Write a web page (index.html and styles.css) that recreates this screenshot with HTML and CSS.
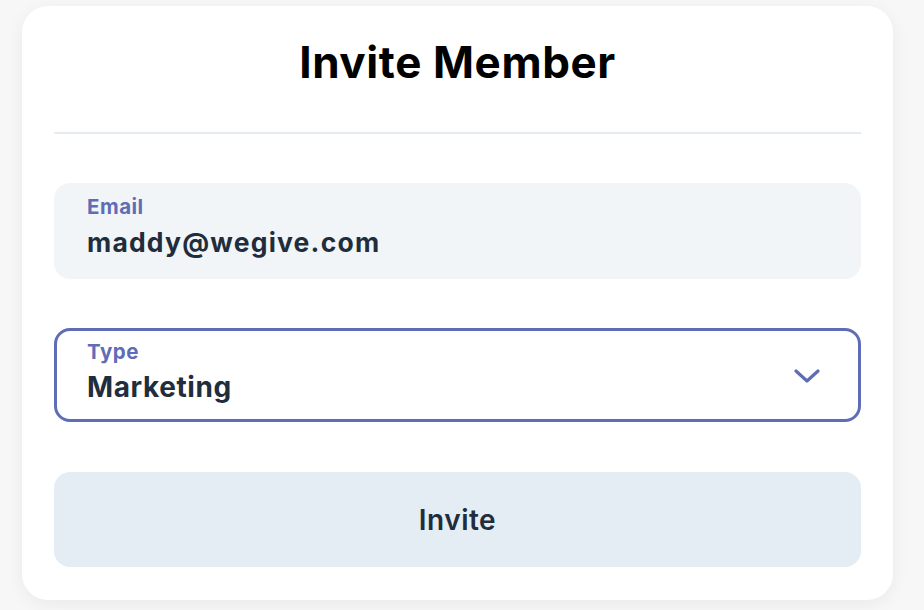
FILE: index.html
```html
<!DOCTYPE html>
<html>
<head>
<meta charset="utf-8">
<link rel="stylesheet" href="styles.css">
</head>
<body>
<div class="card">
  <h1 class="title">Invite Member</h1>
  <div class="divider"></div>
  <div class="field field-filled">
    <div class="label">Email</div>
    <div class="value value-email">maddy@wegive.com</div>
  </div>
  <div class="field field-select">
    <div class="field-text">
      <div class="label">Type</div>
      <div class="value value-type">Marketing</div>
    </div>
    <svg class="chevron" width="26" height="16" viewBox="0 0 26 16"><path d="M2 3 L13 13 L24 3" fill="none" stroke="#5f6db6" stroke-width="3.2" stroke-linecap="round" stroke-linejoin="round"/></svg>
  </div>
  <button class="btn">Invite</button>
</div>
</body>
</html>
```
FILE: styles.css
```css
html, body { margin: 0; padding: 0; }
body {
  background: #f7f7f7;
  font-family: "Inter", "Lato", sans-serif;
  width: 924px;
  height: 610px;
  overflow: hidden;
}
.card {
  margin: 6px 0 0 22px;
  width: 871px;
  height: 594px;
  box-sizing: border-box;
  background: #fff;
  border-radius: 26px;
  box-shadow: 0 4px 18px rgba(0,0,0,0.06);
  padding: 0 32px;
  display: flex;
  flex-direction: column;
}
.title {
  margin: 0;
  padding-top: 30px;
  height: 96px;
  box-sizing: border-box;
  text-align: center;
  font-size: 44px;
  line-height: 52px;
  font-weight: 700;
  color: #000;
  letter-spacing: 0.6px;
}
.divider {
  margin-top: 30px;
  height: 2px;
  background: #e4ecf2;
}
.field {
  margin-top: 49px;
  height: 96px;
  box-sizing: border-box;
  border-radius: 16px;
  padding: 12px 33px 0;
}
.field-filled { background: #f2f5f8; }
.field-select {
  margin-top: 49px;
  height: 94px;
  border: 3px solid #5f6db6;
  padding: 9px 38px 0 30px;
  display: flex;
  align-items: center;
  justify-content: space-between;
}
.field-text { align-self: flex-start; }
.label {
  font-size: 20.5px;
  line-height: 24px;
  font-weight: 700;
  color: #5f6db6;
  letter-spacing: 0.5px;
}
.value {
  font-weight: 700;
  color: #1f2d3d;
}
.value-email { font-size: 26.5px; line-height: 36px; margin-top: 5px; letter-spacing: 1.2px; }
.value-type { font-size: 28px; line-height: 36px; margin-top: 5px; letter-spacing: 0.6px; }
.chevron { margin-top: -8px; }
.btn {
  margin-top: 50px;
  height: 95px;
  border: 0;
  border-radius: 16px;
  background: #e4ecf4;
  font-family: inherit;
  font-size: 28px;
  font-weight: 600;
  letter-spacing: 0.5px;
  color: #1f2d3d;
}
```
